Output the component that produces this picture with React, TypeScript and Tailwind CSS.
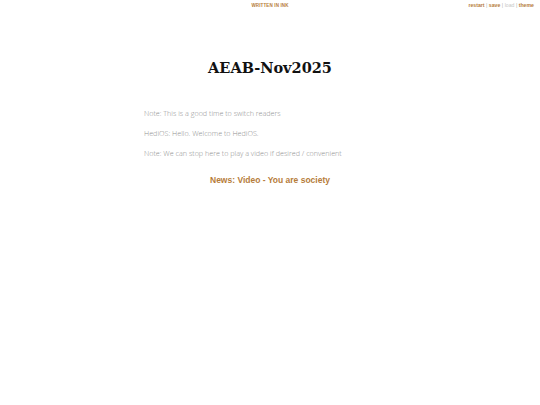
export default function App() {
  return (
    <div className="min-h-[405px] w-full bg-white">
      {/* top bar */}
      <div className="relative h-[11px]">
        <div className="pt-[3px] text-center text-[4.5px] font-bold tracking-[0.03em] text-[#b67c3a] font-['Liberation_Sans',sans-serif]">
          WRITTEN IN INK
        </div>
        <div className="absolute right-[6px] top-[2px] text-[5.2px] font-bold text-[#b67c3a] font-['Liberation_Sans',sans-serif]">
          restart <span className="text-[#b0b0b0] font-normal">|</span> save{" "}
          <span className="text-[#b0b0b0] font-normal">|</span>{" "}
          <span className="text-[#c8c8c8] font-normal">load</span>{" "}
          <span className="text-[#b0b0b0] font-normal">|</span> theme
        </div>
      </div>

      <div className="mx-auto w-[252px]">
        <h1 className="mt-[47px] text-center text-[14.5px] leading-[20px] text-[#111] font-bold font-['DejaVu_Serif',serif]">
          AEAB-Nov2025
        </h1>

        <div className="mt-[31px] flex flex-col gap-[11px] text-[7.2px] leading-[9px] font-light text-[#8f8f8f] font-['Open_Sans',sans-serif]">
          <p>Note: This is a good time to switch readers</p>
          <p>HediOS: Hello. Welcome to HediOS.</p>
          <p>Note: We can stop here to play a video if desired / convenient</p>
        </div>

        <div className="mt-[17px] text-center text-[8.5px] leading-[10px] font-bold text-[#b67c3a] font-['Liberation_Sans',sans-serif]">
          News: Video - You are society
        </div>
      </div>
    </div>
  );
}
